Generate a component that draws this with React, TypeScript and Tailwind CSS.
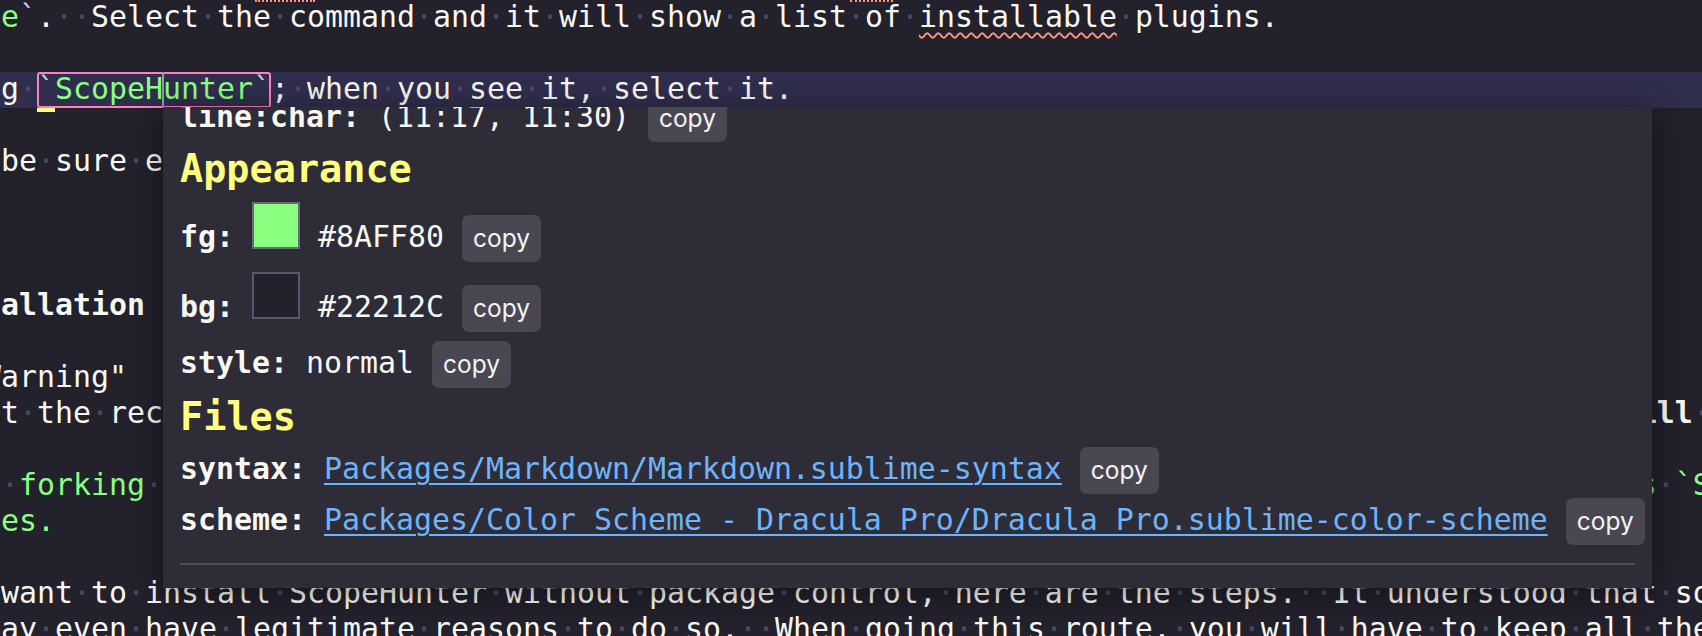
import React from 'react';

type Seg = { t: string; c?: string; b?: boolean; wavy?: boolean };

const W = 'text-[#f8f8f2]';
const G = 'text-[#8aff80]';
const TICK = 'text-[#d3cdea]';

// editor rows, text starts one column left of the visible edge
const lines: (Seg[] | null)[] = [
    [
        { t: 'ge', c: G },
        { t: '`', c: TICK },
        { t: '.  Select the command and it will show a list of ', c: W },
        { t: 'installable', c: W, wavy: true },
        { t: ' plugins.', c: W },
    ],
    null,
    [
        { t: 'ng ', c: W },
        { t: '`', c: TICK },
        { t: 'ScopeHunter', c: G },
        { t: '`', c: TICK },
        { t: '; when you see it, select it.', c: W },
    ],
    null,
    [{ t: ' be sure everything is loaded proper.', c: W }],
    null,
    null,
    null,
    [{ t: 'tallation', c: W, b: true }],
    null,
    [{ t: 'Warning"', c: W }],
    [
        { t: 'ot the recommended way to install ScopeHunter for the average user.  Installing this way ', c: W },
        { t: '**', c: W },
        { t: 'will not', c: W, b: true },
        { t: '** get automatically updated.', c: W },
    ],
    null,
    [{ t: 'e forking for a pull request, you should clone the repository into your Packages directory as `ScopeHunter`.', c: G }],
    [{ t: 'ies.', c: G }],
    null,
    [{ t: ' want to install ScopeHunter without package control, here are the steps.  It understood that some people', c: W }],
    [{ t: 'may even have legitimate reasons to do so.  When going this route, you will have to keep all the files', c: W }],
];

export default function App() {
    return (
        <div className="relative h-[636px] w-[1702px] overflow-hidden bg-[#22212c] font-['DejaVu_Sans_Mono',monospace] text-[29.9px]">
            {/* EDITOR */}
            <div className="-ml-[17px] flex flex-col">
                {lines.map((segs, i) => (
                    <div
                        key={i}
                        className={`h-[36px] shrink-0 whitespace-pre leading-[33px] ${i === 2 ? 'bg-[#302e4d]' : ''}`}
                    >
                        {segs && segs.map((s, j) => <Chunk key={j} seg={s} />)}
                    </div>
                ))}
            </div>

            {/* spell check tails from the row above */}
            <div className="absolute left-[255px] top-0 w-[60px] border-t-2 border-dotted border-[#ff9580]" />
            <div className="absolute left-[850px] top-0 w-[43px] border-t-2 border-dotted border-[#ff9580]" />

            {/* selection box, caret, bracket marker */}
            <div className="absolute left-[37px] top-[72px] h-[36px] w-[234px] rounded-[3px] border-2 border-[#ff80bf]" />
            <div className="absolute left-[162px] top-[72px] h-[35px] w-[2px] bg-[#9a97a8]" />
            <div className="absolute left-[37px] top-[108px] h-[4px] w-[18px] bg-[#ffff80]" />

            {/* POPUP */}
            <div className="absolute left-[163px] top-[107px] h-[481px] w-[1489px] overflow-hidden bg-[#2e2c37] px-[17px] shadow-[0_4px_28px_rgba(0,0,0,0.45)]">
                <div className="-mt-[12px] flex flex-col whitespace-nowrap leading-[36px] text-[#f8f8f2]">
                    <Row>
                        <span className="font-bold">line:char:</span>
                        <span>(11:17, 11:30)</span>
                        <Copy />
                    </Row>

                    <Heading className="mt-[3.7px]">Appearance</Heading>

                    <Row className="mt-[8.3px]">
                        <span className="font-bold">fg:</span>
                        <span className="h-[47px] w-[48px] translate-y-[2px] border-2 border-[#6b677d] bg-[#8aff80]" />
                        <span>#8AFF80</span>
                        <Copy />
                    </Row>

                    <Row className="mt-[8px]">
                        <span className="font-bold">bg:</span>
                        <span className="h-[47px] w-[48px] translate-y-[2px] border-2 border-[#5b5574] bg-[#22212c]" />
                        <span>#22212C</span>
                        <Copy />
                    </Row>

                    <Row className="mt-[9px]">
                        <span className="font-bold">style:</span>
                        <span>normal</span>
                        <Copy />
                    </Row>

                    <Heading className="mt-[5.7px]">Files</Heading>

                    <Row className="mt-[7.3px]">
                        <span className="font-bold">syntax:</span>
                        <Link>Packages/Markdown/Markdown.sublime-syntax</Link>
                        <Copy />
                    </Row>

                    <Row className="mt-[4px]">
                        <span className="font-bold">scheme:</span>
                        <Link>Packages/Color Scheme - Dracula Pro/Dracula Pro.sublime-color-scheme</Link>
                        <Copy />
                    </Row>

                    <div className="mt-[18px] h-[2px] bg-[#4e4c58]" />
                </div>
            </div>
        </div>
    );
}

function Chunk({ seg }: { seg: Seg }) {
    const parts = seg.t.split(/( )/);
    return (
        <span
            className={`${seg.c ?? W} ${seg.b ? 'font-bold' : ''} ${
                seg.wavy
                    ? 'underline decoration-[#ff9580] decoration-wavy decoration-[1.5px] underline-offset-[5px]'
                    : ''
            }`}
        >
            {parts.map((p, i) =>
                p === ' ' ? (
                    <span key={i} className="font-normal text-[#4d4866]">
                        ·
                    </span>
                ) : (
                    p
                ),
            )}
        </span>
    );
}

function Row({ className = '', children }: { className?: string; children: React.ReactNode }) {
    return <div className={`flex shrink-0 items-baseline gap-[18px] ${className}`}>{children}</div>;
}

function Heading({ className = '', children }: { className?: string; children: React.ReactNode }) {
    return (
        <div className={`text-[38.5px] font-bold leading-[46px] text-[#ffff80] ${className}`}>{children}</div>
    );
}

function Link({ children }: { children: React.ReactNode }) {
    return (
        <span className="text-[#6eb4fa] underline decoration-2 underline-offset-[4px]">{children}</span>
    );
}

function Copy() {
    return (
        <span className="h-[47px] w-[79px] shrink-0 rounded-[7px] bg-[#494752] pt-[8px] text-center font-['Inter',sans-serif] text-[24.5px] leading-[30px] text-[#f4f4f2]">
            copy
        </span>
    );
}
